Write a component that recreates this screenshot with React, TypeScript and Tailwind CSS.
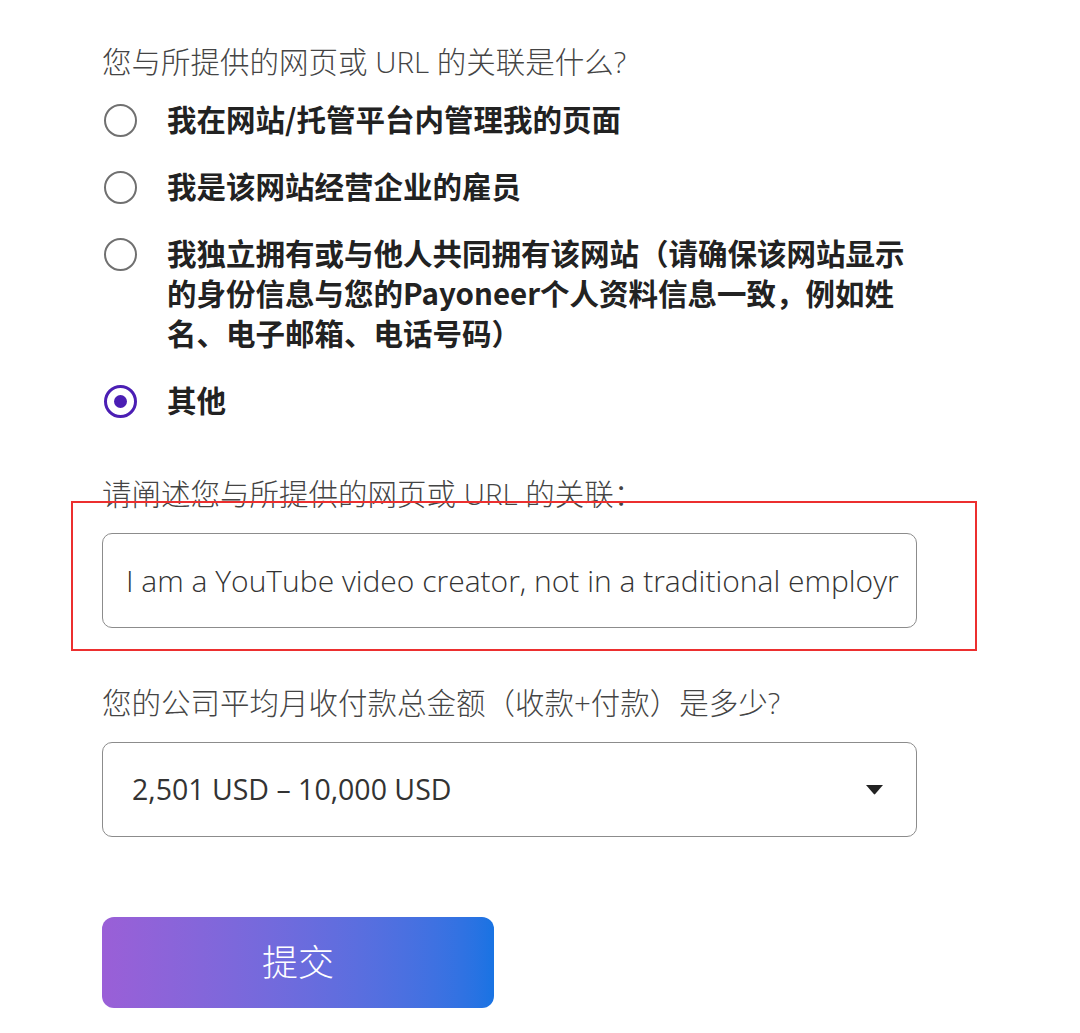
import React, { useState } from "react";

const cjk = "font-['Open_Sans','Noto_Sans_CJK_SC',sans-serif]";

const options = [
  { id: "manage", lines: ["我在网站/托管平台内管理我的页面"] },
  { id: "employee", lines: ["我是该网站经营企业的雇员"] },
  {
    id: "owner",
    lines: [
      "我独立拥有或与他人共同拥有该网站（请确保该网站显示",
      "的身份信息与您的Payoneer个人资料信息一致，例如姓",
      "名、电子邮箱、电话号码）",
    ],
  },
  { id: "other", lines: ["其他"] },
];

function Radio({ checked }: { checked: boolean }) {
  if (checked) {
    return (
      <div className="w-[33px] h-[33px] rounded-full border-[3px] border-[#4b1eb4] flex items-center justify-center">
        <div className="w-[13px] h-[13px] rounded-full bg-[#4b1eb4]" />
      </div>
    );
  }
  return <div className="w-[33px] h-[33px] rounded-full border-2 border-[#707070]" />;
}

export default function App() {
  const [selected, setSelected] = useState("other");

  return (
    <div className={`min-h-[1033px] bg-white pl-[102px] pt-[42px] ${cjk}`}>
      <div className="text-[29.5px] leading-[40px] font-light text-[#444]">
        您与所提供的网页或 URL 的关联是什么?
      </div>

      <div className="mt-[18px] flex flex-col gap-[27px]">
        {options.map((opt) => (
          <div
            key={opt.id}
            className="flex items-start cursor-pointer"
            onClick={() => setSelected(opt.id)}
          >
            <div className="h-[40px] flex items-center ml-[2px]">
              <Radio checked={selected === opt.id} />
            </div>
            <div className="ml-[30px] -translate-y-[2px] text-[29.5px] leading-[40px] font-bold text-[#222] font-['Noto_Sans_CJK_SC',sans-serif]">
              {opt.lines.map((l, i) => (
                <div key={i}>{l}</div>
              ))}
            </div>
          </div>
        ))}
      </div>

      <div className="relative mt-[53px] w-[815px]">
        <div className="text-[29.5px] leading-[40px] font-light text-[#444]">
          请阐述您与所提供的网页或 URL 的关联：
        </div>
        <div className="mt-[19px] h-[95px] rounded-[10px] border-[1.5px] border-[#8c8c8c] flex items-center pl-[23px] pr-[12px] overflow-hidden">
          <span className="whitespace-nowrap text-[30px] font-light text-[#333] font-['Open_Sans',sans-serif]">
            I am a YouTube video creator, not in a traditional employr
          </span>
        </div>
        <div className="absolute left-[-31px] top-[27px] w-[906px] h-[150px] border-2 border-[#ec2f2f] pointer-events-none" />
      </div>

      <div className="mt-[55px] text-[29.5px] leading-[40px] font-light text-[#444]">
        您的公司平均月收付款总金额（收款+付款）是多少?
      </div>

      <div className="mt-[19px] w-[815px] h-[95px] rounded-[10px] border-[1.5px] border-[#8c8c8c] flex items-center justify-between pl-[29px] pr-[32px]">
        <span className="text-[28.5px] text-[#333] font-['Open_Sans',sans-serif]">
          2,501 USD – 10,000 USD
        </span>
        <svg width="19" height="11" viewBox="0 0 19 11">
          <path d="M1 1 H18 L10.2 10 Q9.5 10.8 8.8 10 Z" fill="#222" />
        </svg>
      </div>

      <button className="mt-[80px] w-[392px] h-[91px] rounded-[12px] bg-linear-to-r from-[#9a5fd7] to-[#1873e3] text-white text-[36px] font-light flex items-center justify-center">
        提交
      </button>
    </div>
  );
}
